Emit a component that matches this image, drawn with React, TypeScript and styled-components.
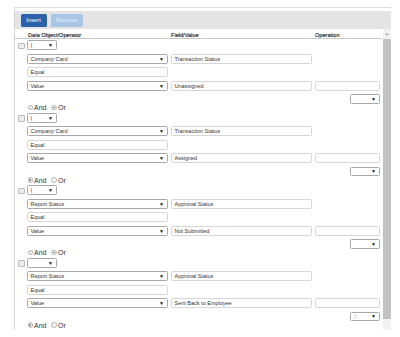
import React from 'react'
import styled, { createGlobalStyle } from 'styled-components'

type Group = {
  paren: string
  object: string
  field: string
  value: string
  close: string
  join: 'and' | 'or'
}

const groups: Group[] = [
  { paren: '(', object: 'Company Card', field: 'Transaction Status', value: 'Unassigned', close: '', join: 'or' },
  { paren: '(', object: 'Company Card', field: 'Transaction Status', value: 'Assigned', close: '', join: 'and' },
  { paren: '(', object: 'Report Status', field: 'Approval Status', value: 'Not Submitted', close: '', join: 'or' },
  { paren: '', object: 'Report Status', field: 'Approval Status', value: 'Sent Back to Employee', close: '))', join: 'and' },
]

const App = () => {
  return (
    <>
      <GlobalStyle />
      <Page>
        <Panel>
          <Toolbar>
            <Button width={26}>Insert</Button>
            <Button width={32} disabled>
              Remove
            </Button>
          </Toolbar>
          <Body>
            <Content>
              <HeaderRow>
                <span />
                <HeaderCell>Data Object/Operator</HeaderCell>
                <HeaderCell>Field/Value</HeaderCell>
                <HeaderCell>Operation</HeaderCell>
              </HeaderRow>
              {groups.map((g, i) => (
                <React.Fragment key={i}>
                  <GroupGrid>
                    <Check />
                    <Select width={30}>
                      <span>{g.paren}</span>
                      <Arrow>▼</Arrow>
                    </Select>
                    <span />
                    <span />
                    <span />
                    <Select>
                      <span>{g.object}</span>
                      <Arrow>▼</Arrow>
                    </Select>
                    <Input>{g.field}</Input>
                    <span />
                    <span />
                    <Input>Equal</Input>
                    <span />
                    <span />
                    <span />
                    <Select>
                      <span>Value</span>
                      <Arrow>▼</Arrow>
                    </Select>
                    <Input>{g.value}</Input>
                    <Input />
                    <span />
                    <span />
                    <span />
                    <Select width={30} muted justify="end">
                      <span>{g.close}</span>
                      <Arrow>▼</Arrow>
                    </Select>
                  </GroupGrid>
                  <Connector>
                    <RadioLabel>
                      <Radio checked={g.join === 'and'} />
                      And
                    </RadioLabel>
                    <RadioLabel>
                      <Radio checked={g.join === 'or'} />
                      Or
                    </RadioLabel>
                  </Connector>
                </React.Fragment>
              ))}
            </Content>
            <ScrollBar>
              <ScrollArrow />
              <Thumb />
            </ScrollBar>
          </Body>
        </Panel>
      </Page>
    </>
  )
}

export default App

const GlobalStyle = createGlobalStyle`
  body {
    margin: 0;
    background: #fff;
    font-family: "Liberation Sans", Arial, sans-serif;
    color: #333;
  }
  * {
    box-sizing: border-box;
  }
`

const Page = styled.div`
  padding: 7px 0 0 14px;
  height: 337px;
  overflow: hidden;
`

const Panel = styled.div`
  width: 377px;
  height: 323px;
  border-top: 1px solid #dcdcdc;
  border-left: 1px solid #d6d6d6;
  padding-top: 3px;
  display: flex;
  flex-direction: column;
`

const Toolbar = styled.div`
  height: 19px;
  background: #e4e4e4;
  display: flex;
  align-items: center;
  gap: 4px;
  padding-left: 5.5px;
`

const Button = styled.div<{ width: number; disabled?: boolean }>`
  width: ${p => p.width}px;
  height: 13px;
  border-radius: 1.5px;
  background: ${p => (p.disabled ? '#a9c5e6' : '#2a63ab')};
  color: ${p => (p.disabled ? '#e8f0fa' : '#fff')};
  font-size: 5.8px;
  display: flex;
  align-items: center;
  justify-content: center;
`

const Body = styled.div`
  flex: 1;
  display: flex;
`

const Content = styled.div`
  flex: 1;
  overflow: hidden;
`

const HeaderRow = styled.div`
  display: grid;
  grid-template-columns: 6px 141px 141px 65px;
  column-gap: 3px;
  padding-left: 3px;
  height: 10px;
  align-items: center;
  border-bottom: 1px solid #c8c8c8;
  margin-right: 1px;
`

const HeaderCell = styled.div`
  font-size: 5.6px;
  color: #222;
  padding-top: 3px;
  -webkit-text-stroke: 0.15px #222;
  &:nth-child(2) {
    padding-left: 1px;
  }
`

const GroupGrid = styled.div`
  display: grid;
  grid-template-columns: 6px 141px 141px 65px;
  grid-template-rows: 10px 10px 10px 10px 9.5px;
  column-gap: 3px;
  row-gap: 3.5px;
  padding-left: 3px;
  margin-top: 1px;
  align-items: center;
`

const Check = styled.div`
  width: 6.5px;
  height: 6.5px;
  border: 1px solid #b9b9b9;
  border-radius: 1px;
  background: #ececec;
  margin-top: 2px;
`

const Select = styled.div<{ width?: number; muted?: boolean; justify?: string }>`
  width: ${p => (p.width ? `${p.width}px` : '100%')};
  height: 100%;
  justify-self: ${p => p.justify || 'start'};
  border: 1px solid #a8a8a8;
  border-radius: 1.5px;
  background: #fff;
  display: flex;
  align-items: center;
  justify-content: space-between;
  padding: 0 3px 0 2.5px;
  font-size: 5.5px;
  color: ${p => (p.muted ? '#c4c4c4' : '#333')};
`

const Arrow = styled.span`
  font-size: 5px;
  color: #111;
`

const Input = styled.div`
  height: 100%;
  border: 1px solid #d6d6d6;
  border-radius: 1.5px;
  background: #fff;
  display: flex;
  align-items: center;
  padding-left: 2.5px;
  font-size: 5.5px;
  color: #333;
`

const Connector = styled.div`
  height: 8px;
  margin-bottom: 1px;
  display: flex;
  align-items: center;
  gap: 5px;
  padding-left: 12.5px;
`

const RadioLabel = styled.label`
  display: flex;
  align-items: center;
  gap: 1px;
  font-size: 7px;
  color: #333;
`

const Radio = styled.span<{ checked: boolean }>`
  width: 5.5px;
  height: 5.5px;
  border-radius: 50%;
  border: 1px solid #b5b5b5;
  background: #f2f2f2;
  position: relative;
  &::after {
    content: '';
    display: ${p => (p.checked ? 'block' : 'none')};
    position: absolute;
    inset: 0.8px;
    border-radius: 50%;
    background: #6b6b6b;
  }
`

const ScrollBar = styled.div`
  width: 8px;
  background: #f1f1f1;
  display: flex;
  flex-direction: column;
  align-items: center;
`

const ScrollArrow = styled.div`
  margin-top: 4px;
  width: 0;
  height: 0;
  border-left: 2px solid transparent;
  border-right: 2px solid transparent;
  border-bottom: 2px solid #a3a3a3;
`

const Thumb = styled.div`
  margin-top: 4px;
  width: 8px;
  height: 280px;
  background: #c1c1c1;
`
